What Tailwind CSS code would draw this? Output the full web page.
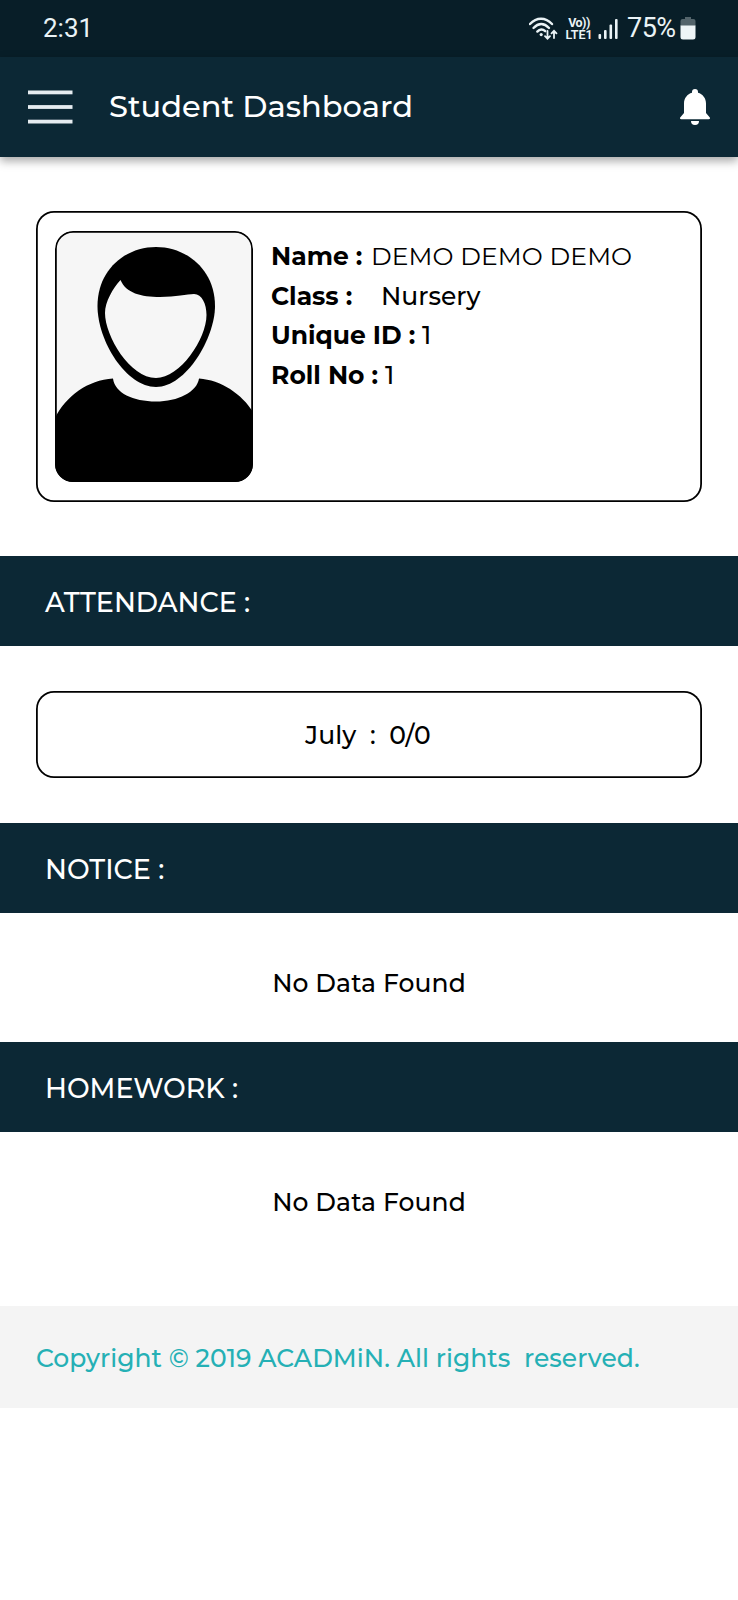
<!DOCTYPE html>
<html lang="en">
<head>
    <meta charset="UTF-8">
    <meta name="viewport" content="width=device-width, initial-scale=1.0">
    <title>Student Dashboard</title>
    <script src="https://cdn.jsdelivr.net/npm/@tailwindcss/browser@4"></script>
</head>
<body class="bg-white min-h-screen text-black font-[Montserrat,Inter,sans-serif]">

    <!-- Status bar -->
    <div class="h-[57px] bg-[#081e28] flex items-center pl-[43px] pr-[42px] text-[#eaf3f6] font-[Roboto,sans-serif]">
        <span class="text-[26px] leading-[56px] h-[57px]">2:31</span>
        <div class="ml-auto flex items-center h-[57px]">
            <svg class="w-[29px] h-[24px]" viewBox="0 0 29 24" fill="none" stroke="currentColor" stroke-width="2.4" stroke-linecap="round">
                <path d="M1 7C7.500 0 16.500 0 23 7"/>
                <path d="M4.500 11C9.500 5.700 15 5.700 20 11"/>
                <path d="M8.300 14.600C10.800 11.800 13.700 11.800 16.200 14.200"/>
                <circle cx="12.200" cy="17.600" r="1.600" fill="currentColor" stroke="none"/>
                <path d="M18.500 14V21.500M16 19.200L18.500 21.700L21 19.200M25 21V14M22.500 16.300L25 13.800L27.500 16.300" stroke-width="1.800"/>
            </svg>
            <div class="ml-[7px] w-[28px] flex flex-col items-center text-[12.500px] leading-[12px]">
                <span class="font-bold tracking-[-0.5px] whitespace-nowrap">Vo))</span>
                <span class="font-semibold whitespace-nowrap">LTE1</span>
            </div>
            <svg class="ml-[5px] w-[20px] h-[22px]" viewBox="0 0 20 22" fill="currentColor">
                <rect x="0.500" y="16" width="2.600" height="5" rx="1"/>
                <rect x="6" y="12" width="2.600" height="9" rx="1"/>
                <rect x="11.500" y="6.500" width="2.600" height="14.500" rx="1"/>
                <rect x="17" y="1" width="2.600" height="20" rx="1"/>
            </svg>
            <span class="ml-[9px] text-[27px] leading-[56px] h-[57px] w-[51px] tracking-[-0.500px]">75%</span>
            <svg class="mb-[1px] ml-[2px] w-[16px] h-[24px]" viewBox="0 0 16 24">
                <path d="M5 1h6v2h2.500a2 2 0 0 1 2 2v5H0.500V5a2 2 0 0 1 2-2H5z" fill="#53646b"/>
                <path d="M0.500 9.500h15V21a2.500 2.500 0 0 1-2.500 2.500H3A2.500 2.500 0 0 1 .5 21z" fill="#eef5f7"/>
            </svg>
        </div>
    </div>

    <!-- App bar -->
    <header class="h-[100px] bg-[#0c2835] flex items-center px-7 shadow-[0_4px_9px_rgba(0,0,0,0.35)]">
        <svg class="w-[45px] h-[36px]" viewBox="0 0 45 36" fill="#e6ecf0">
            <rect x="0" y="1.500" width="44.500" height="3.800"/>
            <rect x="0" y="16.100" width="44.500" height="3.800"/>
            <rect x="0" y="30.700" width="44.500" height="3.800"/>
        </svg>
        <h1 class="ml-[36px] mb-[2px] text-[30.500px] leading-[40px] font-medium text-white whitespace-nowrap">Student Dashboard</h1>
        <svg class="ml-auto w-[30px] h-[36px]" viewBox="0 0 30 36" fill="#fff">
            <path d="M15 0a3 3 0 0 1 3 3v.8c4.700 1.300 8 5.500 8 10.700v9.500l3.600 4.200c.9 1 .3 2-.9 2H1.300c-1.200 0-1.800-1-.9-2L4 24v-9.500C4 9.300 7.300 5.100 12 3.800V3a3 3 0 0 1 3-3z"/>
            <path d="M11 32h8a4 4 0 0 1-8 0z"/>
        </svg>
    </header>

    <main>
        <!-- Student card -->
        <section class="mt-[54px] mx-9 h-[291px] rounded-[18px] shadow-[inset_0_0_0_1.8px_#000] flex pl-[19px] pt-[20px]">
            <svg class="w-[198px] h-[251px] shrink-0 rounded-[18px] bg-[#f6f6f6]" viewBox="55 231 198 251">
                <path d="M156 247C187 247 215 270 215 306C215 338 186 387 156 387C126 387 97.500 341 97.500 306C97.500 270 125 247 156 247Z"/>
                <path d="M120.500 280C126 293 141 297 160 297C176 297 187 294 194 294C202 294 206.500 304 206.500 315C206.500 339 180 378 156 378C130 378 105 336 105 313C105 302 113 288 120.500 280Z" fill="#f6f6f6"/>
                <path d="M55 418C66 396 88 380 113 378.500C115 393 133 401.500 156 401.500C178 401.500 197 392 199 378.500C221 380 242 394 253 412V484H55Z"/>
                <rect x="55.900" y="231.900" width="196.200" height="249.200" rx="17.200" fill="none" stroke="#000" stroke-width="1.800"/>
            </svg>
            <div class="ml-[18px] pt-[6px] text-[25px] leading-[39.500px] whitespace-nowrap">
                <div class="flex"><span class="w-[100px] font-bold">Name :</span><span class="tracking-[0.1px]">DEMO DEMO DEMO</span></div>
                <div class="flex"><span class="w-[110px] font-bold">Class :</span><span class="font-medium">Nursery</span></div>
                <div class="flex"><span class="w-[151px] font-bold">Unique ID :</span><span class="font-medium">1</span></div>
                <div class="flex"><span class="w-[114px] font-bold">Roll No :</span><span class="font-medium">1</span></div>
            </div>
        </section>

        <!-- Attendance -->
        <h2 class="mt-[54px] h-[90px] bg-[#0c2835] text-white text-[27px] font-medium leading-[94px] pl-[45px]">ATTENDANCE :</h2>
        <div class="mt-[45px] mx-9 h-[87px] rounded-[18px] shadow-[inset_0_0_0_1.8px_#000] flex justify-center pr-[2px] text-[25px] font-medium leading-[88px] tracking-[0.1px] whitespace-pre">July  :  0/0</div>

        <!-- Notice -->
        <h2 class="mt-[45px] h-[90px] bg-[#0c2835] text-white text-[27px] font-medium leading-[94px] pl-[45px]">NOTICE :</h2>
        <p class="h-[129px] pt-[50px] text-center text-[25px] font-medium leading-[40px] tracking-[0.1px]">No Data Found</p>

        <!-- Homework -->
        <h2 class="h-[90px] bg-[#0c2835] text-white text-[27px] font-medium leading-[94px] pl-[45px]">HOMEWORK :</h2>
        <p class="h-[174px] pt-[50px] text-center text-[25px] font-medium leading-[40px] tracking-[0.1px]">No Data Found</p>
    </main>

    <footer class="h-[102px] bg-[#f4f4f4] pl-9 text-[25px] font-medium leading-[105px] text-[#25b0b5] tracking-[0.05px] whitespace-pre">Copyright © 2019 ACADMiN. All rights  reserved.</footer>

</body>
</html>
